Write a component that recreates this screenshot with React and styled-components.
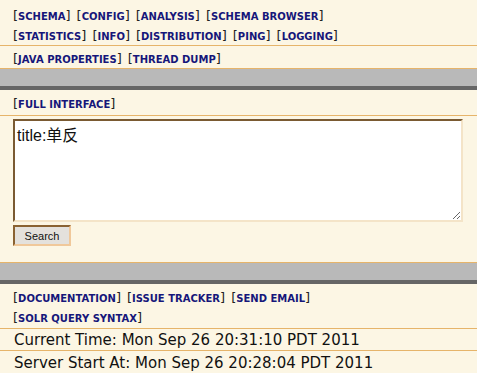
import React from 'react'
import styled, { createGlobalStyle } from 'styled-components'

const GlobalStyle = createGlobalStyle`
 html, body {
  margin: 0;
  padding: 0;
  background-color: #fcf6e4;
 }
 body {
  font-family: Tahoma, "DejaVu Sans", sans-serif;
 }
`

const Page = styled.div`
 display: flex;
 flex-direction: column;
 width: 477px;
 background-color: #fcf6e4;
`

const Section = styled.div`
 display: flex;
 flex-direction: column;
 box-sizing: border-box;
 height: ${(p) => p.$h}px;
 padding: ${(p) => p.$pt || 0}px 0 0 13px;
 border-bottom: 1px solid #e6b46a;
`

const LinkRow = styled.div`
 display: flex;
 align-items: center;
 flex-wrap: wrap;
 gap: 6px;
 height: 20px;
`

const Item = styled.span`
 font-size: 13px;
 color: #222;
 white-space: nowrap;
`

const Link = styled.a`
 font-family: Tahoma, "DejaVu Sans", sans-serif;
 font-size: 10px;
 font-weight: bold;
 color: #16167a;
 text-decoration: none;
 text-transform: uppercase;
`

const Divider = styled.div`
 height: 17px;
 background-color: #b9b9b9;
 border-bottom: 4px solid #666;
`

const Query = styled.form`
 display: flex;
 flex-direction: column;
 align-items: flex-start;
 gap: 3px;
 height: 147px;
 box-sizing: border-box;
 padding: 3px 0 0 13px;
 border-bottom: 1px solid #e6b46a;
`

const TextArea = styled.textarea`
 box-sizing: border-box;
 width: 450px;
 height: 103px;
 margin: 0;
 padding: 1px 2px;
 background: #fff;
 border: 2px solid;
 border-color: #7a5a32 #f4e4c8 #f4e4c8 #7a5a32;
 font-family: "Liberation Sans", "Noto Sans CJK SC", sans-serif;
 font-size: 16px;
 color: #111;
 resize: both;
 outline: none;
`

const Button = styled.button`
 box-sizing: border-box;
 width: 58px;
 height: 21px;
 margin: 0;
 padding: 0;
 background: #e4e1dc;
 border: 2px solid;
 border-color: #8a6232 #f0c89a #f0c89a #8a6232;
 font-family: "Liberation Sans", sans-serif;
 font-size: 11px;
 color: #111;
`

const Info = styled.div`
 display: flex;
 align-items: center;
 box-sizing: border-box;
 height: ${(p) => p.$h || 22}px;
 padding-left: 14px;
 font-family: Tahoma, "DejaVu Sans", sans-serif;
 font-size: 15px;
 color: #111;
 border-bottom: ${(p) => (p.$last ? 'none' : '1px solid #e6b46a')};
 white-space: nowrap;
`

function Links({ names }) {
 return names.map((n) => (
  <Item key={n}>
   [<Link href="#">{n}</Link>]
  </Item>
 ))
}

export default function App() {
 return (
  <Page>
   <GlobalStyle />
   <Section $h={46} $pt={5}>
    <LinkRow>
     <Links names={['Schema', 'Config', 'Analysis', 'Schema Browser']} />
    </LinkRow>
    <LinkRow>
     <Links names={['Statistics', 'Info', 'Distribution', 'Ping', 'Logging']} />
    </LinkRow>
   </Section>
   <Section $h={23} $pt={3}>
    <LinkRow>
     <Links names={['Java Properties', 'Thread Dump']} />
    </LinkRow>
   </Section>
   <Divider />
   <Section $h={26} $pt={3}>
    <LinkRow>
     <Links names={['Full Interface']} />
    </LinkRow>
   </Section>
   <Query onSubmit={(e) => e.preventDefault()}>
    <TextArea defaultValue="title:单反" />
    <Button type="submit">Search</Button>
   </Query>
   <Divider />
   <Section $h={45} $pt={3}>
    <LinkRow>
     <Links names={['Documentation', 'Issue Tracker', 'Send Email']} />
    </LinkRow>
    <LinkRow>
     <Links names={['Solr Query Syntax']} />
    </LinkRow>
   </Section>
   <Info>Current Time: Mon Sep 26 20:31:10 PDT 2011</Info>
   <Info $last $h={23}>Server Start At: Mon Sep 26 20:28:04 PDT 2011</Info>
  </Page>
 )
}
